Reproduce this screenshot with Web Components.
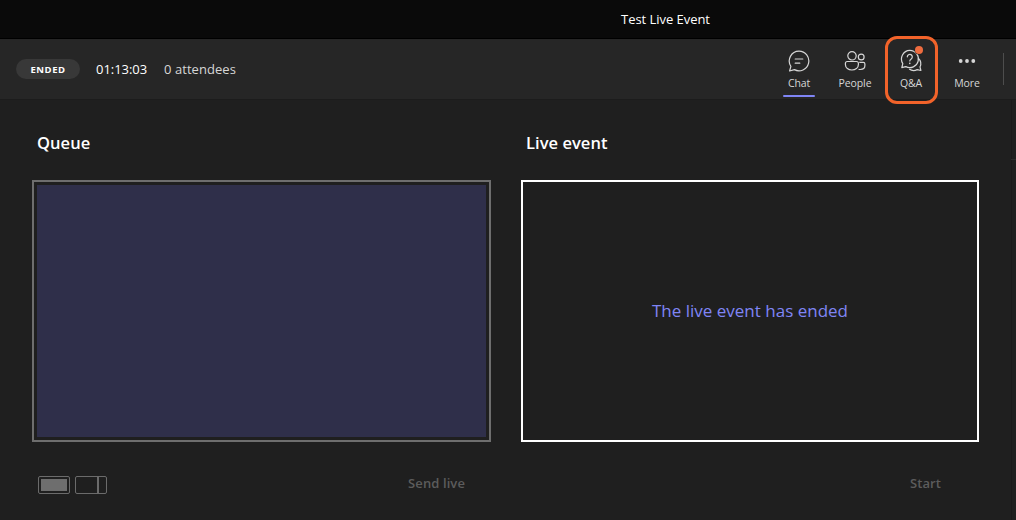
<!DOCTYPE html>
<html><head><meta charset="utf-8">
<style>
html,body{margin:0;padding:0;background:#1f1f1f}
body{width:1016px;height:520px;overflow:hidden;font-family:"Open Sans","Noto Sans",sans-serif;color:#fff}
</style></head><body>
<template id="t-app"><style>
:host{display:grid;grid-template-rows:39px 61px 1fr;width:1016px;height:520px;background:#1f1f1f}
</style><slot></slot></template>

<template id="t-title"><style>
:host{display:flex;align-items:center;justify-content:center;background:#0a0a0a;border-bottom:1px solid #000;box-sizing:border-box;height:39px;padding-left:315px;font-size:13px;color:#fff;font-weight:400;letter-spacing:-.05px}
</style><slot></slot></template>

<template id="t-bar"><style>
:host{display:flex;align-items:center;background:#262626;border-bottom:1px solid #1c1c1c;box-sizing:border-box;height:61px;padding-left:16px}
.right{margin-left:auto;display:flex;align-items:center;height:100%}
.sep{width:1px;height:32px;background:#4d4d4d;margin:0 12px 0 8px}
</style><slot name="left"></slot><div class="right"><slot></slot><div class="sep"></div></div></template>

<template id="t-badge"><style>
:host{display:flex;align-items:center;justify-content:center;width:64px;height:20px;border-radius:10px;background:#383838;font-size:9.5px;font-weight:700;letter-spacing:.55px;color:#fff}
</style><slot></slot></template>

<template id="t-stat"><style>
:host{display:block;font-size:13px;color:var(--c,#fff);margin-left:var(--ml,0);letter-spacing:var(--ls,-.05px)}
</style><slot></slot></template>

<template id="t-tool"><style>
:host{position:relative;display:flex;flex-direction:column;align-items:center;width:56px;height:100%;box-sizing:border-box;padding-top:10px;font-size:10.5px;color:#d6d6d6;letter-spacing:-.1px}
.ic{width:24px;height:24px;display:block;margin-bottom:3px}
:host([active]) .u{position:absolute;left:12px;width:32px;height:2px;bottom:2px;background:#7f85f5;border-radius:1px}
:host([ring]) .r{position:absolute;left:2px;right:1px;top:-3px;bottom:-5px;border:3px solid #f2632a;border-radius:12px;box-sizing:border-box}
.l{line-height:14px}
</style><div class="ic"><slot name="icon"></slot></div><span class="l"><slot></slot></span><div class="u"></div><div class="r"></div></template>

<template id="t-main"><style>
:host{position:relative;display:grid;grid-template-columns:459px 458px;column-gap:30px;padding:0 0 0 32px;box-sizing:border-box}
.rule{position:absolute;right:4px;top:0;bottom:0;width:1px;background:#1a1a1a}
.rule2{position:absolute;right:0;top:59px;width:5px;height:1px;background:#2c2c2c}
</style><slot></slot><div class="rule"></div><div class="rule2"></div></template>

<template id="t-col"><style>
:host{display:flex;flex-direction:column}
h2{margin:0;font-size:16.5px;font-weight:600;color:#fff;line-height:22px;padding:32px 0 0 5px;height:80px;box-sizing:border-box;letter-spacing:.05px}
.foot{display:flex;align-items:center;justify-content:space-between;margin-top:30px;height:22px;padding:0 var(--pr,26px) 0 6px}
</style><h2></h2><slot name="frame"></slot><div class="foot"><slot name="left"><span></span></slot><slot name="action"></slot></div></template>

<template id="t-frame"><style>
:host{display:flex;align-items:center;justify-content:center;box-sizing:border-box;height:262px;border:2px solid #fff;font-size:17px;color:#7f85f5;background:#1f1f1f}
:host([kind=queue]){border-color:#6e6e6e;padding:3px}
.in{flex:1;align-self:stretch;display:flex;align-items:center;justify-content:center;padding-bottom:1px}
:host([kind=queue]) .in{background:#2f2f4a}
</style><div class="in"><slot></slot></div></template>

<template id="t-action"><style>
:host{display:block;font-size:13px;font-weight:600;color:#5c5c5c;letter-spacing:.1px}
</style><slot></slot></template>

<template id="t-layouts"><style>
:host{display:flex;gap:5px;margin-top:3px}
.a,.b{box-sizing:border-box;height:18px;width:32px;border:1px solid #6b6b6b;border-radius:2px;display:flex}
.a{padding:2px;background:#1f1f1f}
.a i{flex:1;background:#6e6e6e;display:block}
.b i{display:block;margin-left:auto;width:9px;border-left:2px solid #6b6b6b;box-sizing:border-box}
</style><div class="a"><i></i></div><div class="b"><i></i></div></template>

<live-app>
  <title-bar>Test Live Event</title-bar>
  <tool-bar>
    <status-badge slot="left">ENDED</status-badge>
    <bar-stat slot="left" style="--ml:16px">01:13:03</bar-stat>
    <bar-stat slot="left" style="--ml:17px;--c:#d6d6d6;--ls:.05px">0 attendees</bar-stat>
    <tool-button active>
      <svg slot="icon" viewBox="0 0 24 24" width="24" height="24" fill="none" stroke="#d6d6d6" stroke-width="1.2"><path d="M12 2.2a9.8 9.8 0 1 1-4.6 18.45L2.6 22l1.3-4.6A9.8 9.8 0 0 1 12 2.2Z" stroke-linejoin="round"/><path d="M8.2 10h7.6M8.2 14.2h4.6" stroke-linecap="round"/></svg>
      Chat</tool-button>
    <tool-button>
      <svg slot="icon" viewBox="0 0 24 24" width="24" height="24" fill="none" stroke="#d6d6d6" stroke-width="1.2"><circle cx="9" cy="6.8" r="4.2"/><circle cx="18.2" cy="8" r="2.9"/><path d="M2.4 14.4c0-1.1.9-1.9 1.9-1.9h9.2c1.1 0 1.9.8 1.9 1.9v1c0 3.4-3 5.6-6.5 5.6s-6.5-2.2-6.5-5.6Z"/><path d="M15.6 20.3a6 6 0 0 0 1.6.2c2.7 0 4.7-1.5 4.7-3.9v-1.6c0-.9-.7-1.6-1.6-1.6h-4"/></svg>
      People</tool-button>
    <tool-button ring>
      <svg slot="icon" viewBox="0 0 24 24" width="24" height="24" fill="none" stroke="#d6d6d6" stroke-width="1.2" style="overflow:visible"><path d="M10.8 1.4a8.6 8.6 0 1 1-4 16.2l-4 1 1-4a8.6 8.6 0 0 1 7-13.2Z" stroke-linejoin="round"/><path d="M19.3 9.2a7.6 7.6 0 0 1 1.7 8.7l.9 3.6-3.7-.9a7.6 7.6 0 0 1-8-.6" stroke-linejoin="round"/><path d="M8.3 7.8a2.5 2.5 0 1 1 3.9 2.1c-.9.6-1.4 1-1.4 2" stroke-linecap="round"/><circle cx="10.8" cy="14.4" r=".8" fill="#d6d6d6" stroke="none"/><circle cx="20" cy="1" r="4.6" fill="#262626" stroke="none"/><circle cx="20" cy="1" r="4" fill="#ef6c3f" stroke="none"/></svg>
      Q&amp;A</tool-button>
    <tool-button>
      <svg slot="icon" viewBox="0 0 24 24" width="24" height="24" fill="#d6d6d6"><circle cx="5.7" cy="12" r="1.9"/><circle cx="12" cy="12" r="1.9"/><circle cx="18.3" cy="12" r="1.9"/></svg>
      More</tool-button>
  </tool-bar>
  <main-area>
    <stage-col heading="Queue">
      <stage-frame slot="frame" kind="queue"></stage-frame>
      <layout-switch slot="left"></layout-switch>
      <action-label slot="action">Send live</action-label>
    </stage-col>
    <stage-col heading="Live event" style="--pr:38px">
      <stage-frame slot="frame">The live event has ended</stage-frame>
      <action-label slot="action">Start</action-label>
    </stage-col>
  </main-area>
</live-app>
<script>
const reg=(n,t,extra)=>customElements.define(n,class extends HTMLElement{
  constructor(){super();this.attachShadow({mode:'open'}).appendChild(document.getElementById(t).content.cloneNode(true));}
  connectedCallback(){if(extra)extra(this);}
});
reg('live-app','t-app');reg('title-bar','t-title');reg('tool-bar','t-bar');reg('status-badge','t-badge');
reg('bar-stat','t-stat');reg('tool-button','t-tool');reg('main-area','t-main');
reg('stage-col','t-col',e=>{e.shadowRoot.querySelector('h2').textContent=e.getAttribute('heading')});
reg('stage-frame','t-frame');reg('action-label','t-action');reg('layout-switch','t-layouts');
</script>
</body></html>
